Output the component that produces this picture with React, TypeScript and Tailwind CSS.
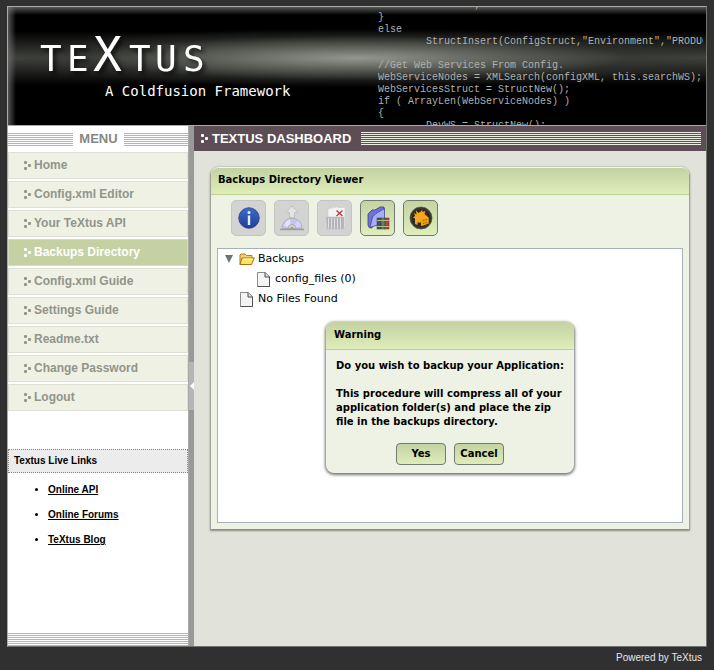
import React from "react";

const menuItems = [
  "Home",
  "Config.xml Editor",
  "Your TeXtus API",
  "Backups Directory",
  "Config.xml Guide",
  "Settings Guide",
  "Readme.txt",
  "Change Password",
  "Logout",
];

const liveLinks = ["Online API", "Online Forums", "TeXtus Blog"];

const code = `                ;
}
else
        StructInsert(ConfigStruct,"Environment","PRODUCTION");

//Get Web Services From Config.
WebServiceNodes = XMLSearch(configXML, this.searchWS);
WebServicesStruct = StructNew();
if ( ArrayLen(WebServiceNodes) )
{
        DevWS = StructNew();`;

function Dots({ className = "" }: { className?: string }) {
  return (
    <svg viewBox="0 0 8 9" className={`h-[9px] w-2 shrink-0 ${className}`} fill="currentColor" aria-hidden="true">
      <rect x="0" y="0" width="3" height="3" rx="1" />
      <rect x="0" y="6" width="3" height="3" rx="1" />
      <rect x="4" y="3" width="3" height="3" rx="1" />
    </svg>
  );
}

function Logo() {
  return (
    <svg viewBox="0 0 180 54" className="h-[54px] w-[180px] overflow-visible drop-shadow-[3px_3px_2px_rgba(0,0,0,0.7)]" role="img" aria-label="TeXtus">
      <text y="46" fill="#fff" fontFamily="'DejaVu Sans Mono', monospace" fontSize="36">
        <tspan x="0 27">TE</tspan>
        <tspan x="53" fontSize="48">X</tspan>
        <tspan x="89 115 143">TUS</tspan>
      </text>
    </svg>
  );
}

function InfoIcon() {
  return (
    <svg viewBox="0 0 24 24" className="size-6" aria-hidden="true">
      <defs>
        <linearGradient id="info" x1="0" y1="0" x2="0" y2="1">
          <stop offset="0" stopColor="#3f6cc4" />
          <stop offset="1" stopColor="#1c3f9c" />
        </linearGradient>
      </defs>
      <circle cx="12" cy="12" r="10.3" fill="url(#info)" stroke="#2a4488" strokeWidth="0.8" />
      <circle cx="12" cy="6.500" r="1.500" fill="#e8ecf6" />
      <rect x="10.800" y="9.500" width="2.400" height="9.500" fill="#e8ecf6" />
    </svg>
  );
}

function DiscIcon() {
  return (
    <svg viewBox="0 0 24 26" className="h-[26px] w-6" aria-hidden="true">
      <path d="M2 23.500A10 10.500 0 0 1 22 23.500Z" fill="#c4c4ee" stroke="#b0b0b4" />
      <path d="M4 21C5 16 8 14.500 10 14.500L10.500 19L8.500 22Z" fill="#e2e2fa" />
      <path d="M14 20L18 15.500C20 17.500 21 20 21 22H15.500Z" fill="#d6d2fc" />
      <path d="M8 23.500A4 4 0 0 1 16 23.500Z" fill="#d2d2d2" stroke="#a6a6ac" strokeWidth="0.8" />
      <path d="M10.500 23.500A1.500 1.500 0 0 1 13.500 23.500Z" fill="#8c8c96" />
      <path d="M0 24.500H24" stroke="#9e9ea4" strokeWidth="1.500" />
      <path d="M12 1L18 7.500H14.500V12.500H9.500V7.500H6Z" fill="#e4e4e4" stroke="#b4b6b4" strokeDasharray="1.500 1" />
    </svg>
  );
}

function ShredIcon() {
  return (
    <svg viewBox="0 0 24 26" className="h-[26px] w-6" aria-hidden="true">
      <path d="M5 13V3L7 4V2L9 3.500L10 1.500L12 3L13 1.500L15 2.500H22V22L20 24H6Z" fill="#f3f3f3" stroke="#cdcdcd" strokeWidth="0.600" />
      <path d="M3 12H21V24H4Z" fill="#b4b4b8" stroke="#c4c4c6" strokeWidth="0.600" />
      <path d="M5.500 13V23.500M8.500 13V23.500M11.500 13V23.500M14.500 13V23.500M17.500 13V23.500" stroke="#e0e0e4" />
      <path d="M13.500 5.500L19.500 11M19.500 5.500L13.500 11" stroke="#b8303c" strokeWidth="1.200" />
    </svg>
  );
}

function ArchiveIcon() {
  return (
    <svg viewBox="0 0 24 26" className="h-[26px] w-6" aria-hidden="true">
      <path d="M2 9L6 5H9L14 2H18V5L8 14L6 23L3 22.500L2 20Z" fill="#6e72d8" stroke="#3a3c88" strokeWidth="0.800" />
      <path d="M4 22.500L6.500 12L10 8.500L18.500 3.500V17L10 20.500Z" fill="#a9adf8" stroke="#4346a0" strokeWidth="0.800" />
      <rect x="11" y="13" width="4" height="11" fill="#44506e" stroke="#333b4c" strokeWidth="0.500" />
      <rect x="15" y="13" width="4" height="11" fill="#4c8c50" stroke="#333f38" strokeWidth="0.500" />
      <rect x="19" y="13" width="4" height="11" fill="#a34a48" stroke="#553333" strokeWidth="0.500" />
      <path d="M11 15.500H23M11 21.500H23" stroke="#c5ae82" />
    </svg>
  );
}

function HomeIcon() {
  return (
    <svg viewBox="0 0 24 24" className="size-6" aria-hidden="true">
      <circle cx="12" cy="12" r="11" fill="#2c2c26" stroke="#5c5e4c" strokeWidth="0.800" />
      <circle cx="12" cy="12" r="9.800" fill="none" stroke="#46463e" strokeWidth="0.600" />
      <path d="M4 11.500L6 10L5 7L7.500 8.500L7 4.500L9.500 7L12 5.500L13 3.500L13.500 6L16.500 5L15.500 8L19.500 11.500V17.500L12 20V16.500H8.500V19L6 18V12.500Z" fill="#f9a51a" />
      <path d="M12.500 13L19.500 11.500V17.500L12.500 20Z" fill="#eda00e" />
      <path d="M14 14.500L18 13.500M14 17.500L18 16.500" stroke="#9c6206" strokeDasharray="1.500 1" />
    </svg>
  );
}

function FolderIcon() {
  return (
    <svg viewBox="0 0 16 13" className="h-[13px] w-4 shrink-0" aria-hidden="true">
      <path d="M1 11.500V2L2 1H6L7.500 2.500H13V5" fill="#f3cf72" stroke="#b27a25" />
      <path d="M3 5H15.300L12.500 11.500H1Z" fill="#ffe45a" stroke="#a96c1c" />
      <path d="M4 6H13.500" stroke="#fff9c9" />
    </svg>
  );
}

function FileIcon() {
  return (
    <svg viewBox="0 0 13 15" className="h-[15px] w-[13px] shrink-0" aria-hidden="true">
      <path d="M0.500 0.500H8L12.500 5V14.500H0.500Z" fill="#f4f4f4" stroke="#8c8c8c" />
      <path d="M8 0.500L12.500 5V14.500H0.500" fill="none" stroke="#505050" />
      <path d="M8 0.500V5H12.500" fill="#e1e1e1" stroke="#4c4c4c" />
    </svg>
  );
}

const tools = [
  { label: "Information", icon: <InfoIcon />, enabled: false },
  { label: "Restore", icon: <DiscIcon />, enabled: false },
  { label: "Delete", icon: <ShredIcon />, enabled: false },
  { label: "Backup application", icon: <ArchiveIcon />, enabled: true },
  { label: "Dashboard home", icon: <HomeIcon />, enabled: true },
];

const stripes = "bg-[repeating-linear-gradient(to_bottom,#b5b5ab_0_1px,#fff_1px_2px)]";

function Header() {
  return (
    <header className="relative h-[119px] overflow-hidden border-b border-[#a9aba4] bg-black">
      <div className="absolute inset-x-0 top-[24px] h-[54px] bg-linear-to-b from-transparent via-[#40423e] to-transparent" />
      <div className="absolute inset-0 bg-[radial-gradient(ellipse_360px_30px_at_50%_51px,#92968b_0%,#656861cc_40%,#30322e66_75%,transparent_100%)]" />
      <div className="absolute inset-x-0 top-0 h-2 bg-linear-to-b from-[#555] to-transparent" />
      <div className="absolute inset-y-0 left-0 w-2 bg-linear-to-r from-[#777]/70 to-transparent" />
      <div className="relative flex h-[118px] items-center">
        <div className="flex w-[370px] shrink-0 flex-col pl-8">
          <Logo />
          <p className="pl-[65px] pb-[6px] pt-[2px] font-['DejaVu_Sans_Mono',monospace] text-[14px] leading-5 text-white">A Coldfusion Framework</p>
        </div>
        <pre className="mr-[3px] min-w-0 flex-1 overflow-hidden font-['Liberation_Mono',monospace] text-[10px] leading-3 text-[#b0b0ac]">{code}</pre>
      </div>
    </header>
  );
}

function Sidebar() {
  return (
    <aside className="flex w-[180px] shrink-0 flex-col bg-white">
      <div className="flex h-[26px] items-center">
        <div className={`h-[13px] flex-1 ${stripes}`} />
        <h2 className="w-[51px] pl-px text-center text-[13px] leading-4 font-bold text-[#85877f]">MENU</h2>
        <div className={`h-[13px] flex-1 ${stripes}`} />
      </div>
      <nav className="flex flex-col gap-[2px]">
        {menuItems.map((item) => (
          <a
            key={item}
            href="#"
            className={
              item === "Backups Directory"
                ? "flex h-[27px] items-center gap-[2px] border border-[#d5dbc3] bg-[#c5d1a2] pl-[15px] text-[12px] leading-4 font-bold text-white"
                : "flex h-[27px] items-center gap-[2px] border border-[#dde0d2] bg-[#eef1e4] pl-[15px] text-[12px] leading-4 font-bold text-[#92958b]"
            }
          >
            <Dots />
            <span className="pb-[2px]">{item}</span>
          </a>
        ))}
      </nav>
      <h3 className="mt-[38px] border border-dotted border-[#888] bg-[#ececec] px-[5px] pt-1 pb-[5px] text-[10px] leading-[13px] font-bold text-black">
        Textus Live Links
      </h3>
      <ul className="mt-[10px] flex list-disc flex-col gap-[11px] pl-10 text-[10px] leading-[14px] font-bold text-black">
        {liveLinks.map((link) => (
          <li key={link}>
            <a href="#" className="underline">{link}</a>
          </li>
        ))}
      </ul>
      <div className={`mt-auto h-[13px] ${stripes}`} />
    </aside>
  );
}

function WarningDialog() {
  const button =
    "h-[22px] w-[50px] rounded-[4px] border border-[#6f7a73] bg-linear-to-b from-[#c5d3a4] to-[#deecb9] text-[10px] leading-4 font-bold";
  return (
    <div
      role="dialog"
      aria-labelledby="warning-title"
      className="absolute inset-x-0 top-[154px] mx-auto w-[248px] rounded-[8px] bg-[#eef2e4] pb-2 shadow-[0_1px_3px_1px_#777]"
    >
      <h3
        id="warning-title"
        className="h-[28px] rounded-t-[8px] border-b border-[#bfd08f] bg-linear-to-b from-[#c4d2a2] to-[#dfedba] px-2 text-[10px] leading-[26px] font-bold"
      >
        Warning
      </h3>
      <div className="px-[10px] pt-[9px] text-[10px] leading-[14px] font-bold">
        <p className="whitespace-nowrap">Do you wish to backup your Application:</p>
        <p className="mt-[14px] whitespace-nowrap">
          This procedure will compress all of your
          <br />
          application folder(s) and place the zip
          <br />
          file in the backups directory.
        </p>
      </div>
      <div className="mt-[14px] flex justify-center gap-2">
        <button type="button" className={button}>Yes</button>
        <button type="button" className={button}>Cancel</button>
      </div>
    </div>
  );
}

function BackupsPanel() {
  return (
    <section className="relative mx-[17px] mt-4 rounded-t-[8px] border-t border-[#f4f6ee] bg-[#eef2e4] pb-[6px] font-['DejaVu_Sans',Verdana,sans-serif] text-black shadow-[0_1px_2px_1px_#888b80]">
      <h2 className="h-[27px] rounded-t-[7px] border-b border-[#bfd08f] bg-linear-to-b from-[#c4d2a2] to-[#dfedba] px-[7px] text-[10px] leading-[24px] font-bold">
        Backups Directory Viewer
      </h2>
      <div className="flex gap-2 px-5 pt-[5px]">
        {tools.map((tool) => (
          <button
            key={tool.label}
            type="button"
            aria-label={tool.label}
            disabled={!tool.enabled}
            className={
              tool.enabled
                ? "flex h-9 w-[35px] items-center justify-center rounded-[5px] border border-[#6f7a73] bg-linear-to-b from-[#c5d3a4] to-[#e0eebb]"
                : "flex h-9 w-[35px] items-center justify-center rounded-[5px] border border-[#c3c6c0] bg-[#d3d4d1]"
            }
          >
            {tool.icon}
          </button>
        ))}
      </div>
      <ul className="mx-[6px] mt-3 h-[275px] border border-[#a6b2b6] bg-white text-[11px] leading-5">
        <li>
          <div className="flex h-5 items-center pl-[7px]">
            <svg viewBox="0 0 8 8" className="mr-[6px] size-2 shrink-0" aria-hidden="true">
              <path d="M0 0H8L4 8Z" fill="#6d7674" />
            </svg>
            <FolderIcon />
            <span className="pl-[3px]">Backups</span>
          </div>
          <ul>
            <li className="flex h-5 items-center pl-[39px]">
              <FileIcon />
              <span className="pl-[5px]">config_files (0)</span>
            </li>
          </ul>
        </li>
        <li className="flex h-5 items-center pl-[22px]">
          <FileIcon />
          <span className="pl-[5px]">No Files Found</span>
        </li>
      </ul>
      <WarningDialog />
    </section>
  );
}

export default function App() {
  return (
    <div className="min-h-screen bg-[#303030] px-[7px] pt-[6px] font-['Liberation_Sans',Arial,sans-serif]">
      <div className="border border-t-[#a9aba4] border-r-[#70736c] border-b-[#70736c] border-l-[#a9aba4]">
        <Header />
        <div className="flex min-h-[520px]">
          <Sidebar />
          <div className="flex w-[6px] shrink-0 flex-col justify-center border-l border-[#a9aba4] bg-[#999]">
            <button type="button" aria-label="Collapse menu" className="flex h-12 items-center justify-end bg-[#b4b5b6]">
              <svg viewBox="0 0 4 8" className="h-2 w-1" aria-hidden="true">
                <path d="M4 0V8L0 4Z" fill="#fff" />
              </svg>
            </button>
          </div>
          <main className="min-w-0 flex-1 bg-[#e1e3da]">
            <div className="flex h-[25px] items-center bg-[#5d4d55] pr-[5px] pl-[7px] text-white">
              <Dots />
              <h1 className="pr-[10px] pl-[3px] text-[13px] leading-4 font-bold whitespace-nowrap">TEXTUS DASHBOARD</h1>
              <div className="h-[13px] flex-1 bg-[repeating-linear-gradient(to_bottom,#eceee4_0_1px,#5d4d55_1px_2px)]" />
            </div>
            <BackupsPanel />
          </main>
        </div>
      </div>
      <footer className="px-[5px] pt-1 pb-[5px] text-right text-[10px] leading-[14px] text-[#e6e6e6]">Powered by TeXtus</footer>
    </div>
  );
}
